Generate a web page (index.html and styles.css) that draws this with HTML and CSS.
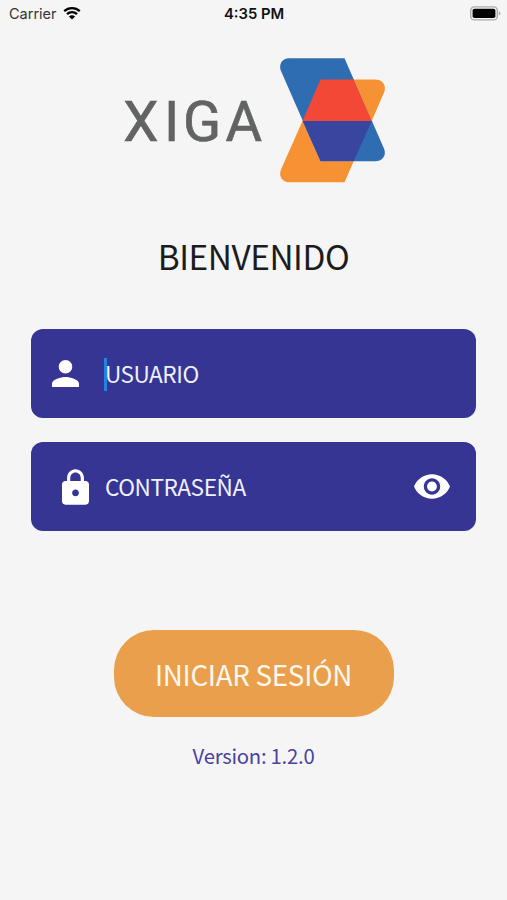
FILE: index.html
```html
<!DOCTYPE html>
<html lang="es">
	<head>
		<meta charset="utf-8">
		<title>XIGA</title>
		<link rel="stylesheet" href="styles.css">
	</head>
	<body>
		<div class="status-bar">
			<div class="carrier">
				<span>Carrier</span>
				<svg class="wifi" viewBox="0 0 18 14">
					<path d="M1.2 5.2A11.2 11.2 0 0 1 16.8 5.2M4 8.2A7.2 7.2 0 0 1 14 8.2"/>
					<path class="dot" d="M9 13.6L5.9 10.5A4.4 4.4 0 0 1 12.1 10.5Z"/>
				</svg>
			</div>
			<div class="time">4:35 PM</div>
			<svg class="battery" viewBox="0 0 31 15">
				<rect x="0.7" y="0.9" width="26.6" height="13" rx="3.5" fill="#f5f5f5" stroke="#aaa" stroke-width="1.4"/>
				<rect x="2.6" y="2.8" width="22.8" height="9.2" rx="1.8" fill="#000"/>
				<path d="M28.8 5.2Q32 7.4 28.8 9.6Z" fill="#aaa"/>
			</svg>
		</div>

		<svg class="logo" viewBox="120 50 270 140">
			<text x="123.2 163.9 183 225.5" y="140.8">XIGA</text>
			<path fill="#2f6db3" d="M289 58.3H344.5L384.2 149Q386 154 383 158Q380 161.3 375 161.3H320.5L281 71Q279 66 281.5 62Q284 58.5 289 58.3Z"/>
			<path fill="#f79234" d="M353.7 79.5H375Q380 79.5 383 82.8Q386 87 384.2 92L371.7 121ZM302.5 121L320.5 161.3H353.7L344.5 182.3H289Q284 182 281.5 178.5Q279 174.5 281 169.5Z"/>
			<path fill="#f24835" d="M320.5 79.5H353.7L371.7 121H302.5Z"/>
			<path fill="#3946a0" d="M302.5 121H371.7L353.7 161.3H320.5Z"/>
		</svg>

		<h1 class="title">BIENVENIDO</h1>

		<form class="login">
			<div class="field">
				<svg class="user-icon" viewBox="4 4 16 16">
					<path d="M12 12c2.21 0 4-1.79 4-4s-1.79-4-4-4-4 1.79-4 4 1.79 4 4 4zm0 2c-2.67 0-8 1.34-8 4v2h16v-2c0-2.66-5.33-4-8-4z"/>
				</svg>
				<span class="cursor"></span>
				<span class="label">USUARIO</span>
			</div>
			<div class="field">
				<svg class="lock-icon" viewBox="4 1 16 21">
					<path d="M18 8h-1V6c0-2.76-2.24-5-5-5S7 3.24 7 6v2H6c-1.1 0-2 .9-2 2v10c0 1.1.9 2 2 2h12c1.1 0 2-.9 2-2V10c0-1.1-.9-2-2-2zm-6 9c-1.1 0-2-.9-2-2s.9-2 2-2 2 .9 2 2-.9 2-2 2zm3.1-9H8.9V6c0-1.71 1.39-3.1 3.1-3.1s3.1 1.39 3.1 3.1v2z"/>
				</svg>
				<span class="label">CONTRASEÑA</span>
				<svg class="eye-icon" viewBox="1 4.5 22 15">
					<path d="M12 4.5C7 4.5 2.73 7.61 1 12c1.73 4.39 6 7.5 11 7.5s9.27-3.11 11-7.5c-1.73-4.39-6-7.5-11-7.5zM12 17c-2.76 0-5-2.24-5-5s2.24-5 5-5 5 2.24 5 5-2.24 5-5 5zm0-8c-1.66 0-3 1.34-3 3s1.34 3 3 3 3-1.34 3-3-1.34-3-3-3z"/>
				</svg>
			</div>
			<button type="button" class="submit">INICIAR SESIÓN</button>
		</form>

		<div class="version">Version: 1.2.0</div>
	</body>
</html>
```
FILE: styles.css
```css
*{
	box-sizing: border-box;
}
body{
	margin: 0;
	height: 900px;
	background: #f5f5f5;
	font-family: "Noto Sans CJK SC", "Noto Sans", sans-serif;
	display: flex;
	flex-direction: column;
	align-items: center;
	overflow: hidden;
}
svg{
	display: block;
	flex: none;
}
.status-bar{
	width: 100%;
	height: 28px;
	padding: 0 6px 1px 9px;
	display: grid;
	grid-template-columns: 1fr auto 1fr;
	align-items: center;
	font-family: Inter, sans-serif;
	font-size: 14.5px;
	color: #333;
}
.carrier{
	display: flex;
	align-items: center;
	gap: 6px;
}
.wifi{
	width: 18px;
	height: 14px;
	margin-top: -1px;
	fill: none;
	stroke: #000;
	stroke-width: 2.3;
}
.wifi .dot{
	fill: #000;
	stroke: none;
}
.time{
	margin-right: 2px;
	font-size: 14.8px;
	font-weight: 600;
	color: #111;
}
.battery{
	width: 31px;
	height: 15px;
	margin-top: -1px;
	justify-self: end;
}
.logo{
	width: 270px;
	height: 140px;
	margin: 22px 0 0 3px;
}
.logo text{
	font-family: Roboto, sans-serif;
	font-size: 56px;
	fill: #626464;
	stroke: #626464;
	stroke-width: 0.7px;
}
.title{
	margin: 41px 0 0;
	height: 50px;
	line-height: 49px;
	font-size: 33.4px;
	font-weight: 400;
	letter-spacing: -0.45px;
	color: #1c1c1c;
}
.login{
	width: 445px;
	margin-top: 47.5px;
	display: flex;
	flex-direction: column;
	align-items: center;
}
.field{
	width: 100%;
	height: 89px;
	margin-bottom: 24.5px;
	padding: 0 26px 0 21px;
	display: flex;
	align-items: center;
	background: #363594;
	border-radius: 12px;
	color: #f0f1ff;
	font-size: 22.6px;
	letter-spacing: -0.45px;
	line-height: 34px;
}
.field svg{
	fill: #fff;
}
.user-icon{
	width: 27px;
	height: 27px;
	margin-right: 25px;
}
.cursor{
	width: 3px;
	height: 33px;
	margin: 2px -2px 0 0;
	background: #2383e2;
}
.label{
	padding-top: 1px;
}
.lock-icon{
	width: 27px;
	height: 36px;
	margin: 0 16px 0 10px;
}
.eye-icon{
	width: 36px;
	height: 25px;
	margin-left: auto;
}
.submit{
	width: 280px;
	height: 86.5px;
	margin-top: 74.5px;
	padding: 2px 0 0;
	border: none;
	border-radius: 40px;
	background: #e99f4b;
	color: #fff8ee;
	font-family: inherit;
	font-size: 27.8px;
	letter-spacing: -0.3px;
}
.version{
	margin-top: 22px;
	line-height: 32px;
	font-size: 20.3px;
	letter-spacing: -0.25px;
	color: #4a429f;
}
```
